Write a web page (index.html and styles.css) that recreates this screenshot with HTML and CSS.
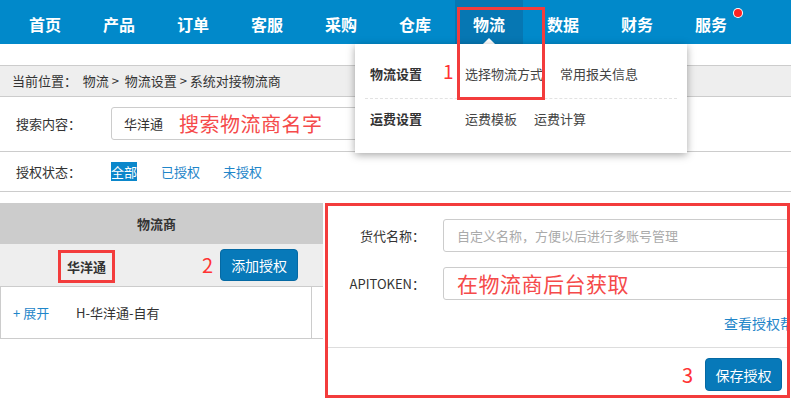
FILE: index.html
```html
<!DOCTYPE html>
<html lang="zh-CN">
<head>
<meta charset="UTF-8" />
<meta name="viewport" content="width=device-width, initial-scale=1" />
<title>系统对接物流商</title>
<link rel="stylesheet" href="styles.css">
</head>
<body>
  <header class="topnav">
    <ul class="nav">
      <li>首页</li>
      <li>产品</li>
      <li>订单</li>
      <li>客服</li>
      <li>采购</li>
      <li>仓库</li>
      <li class="active">物流</li>
      <li>数据</li>
      <li>财务</li>
      <li class="has-dot">服务</li>
    </ul>
  </header>

  <!-- open submenu of 物流 -->
  <div class="dropdown">
    <div class="menu-row first">
      <span class="menu-title">物流设置</span>
      <span class="menu-mark">1</span>
      <a class="menu-link">选择物流方式</a>
      <a class="menu-link">常用报关信息</a>
    </div>
    <div class="menu-row">
      <span class="menu-title">运费设置</span>
      <span class="menu-mark"></span>
      <a class="menu-link">运费模板</a>
      <a class="menu-link">运费计算</a>
    </div>
  </div>
  <div class="note-box note-one"></div>

  <div class="crumb">当前位置：&nbsp; 物流 &gt;&nbsp; 物流设置 &gt; 系统对接物流商</div>

  <div class="filter">
    <div class="filter-row search">
      <span class="filter-label">搜索内容：</span>
      <div class="search-box">
        <span class="search-value">华洋通</span>
        <span class="hint">搜索物流商名字</span>
      </div>
    </div>
    <div class="filter-row status">
      <span class="filter-label">授权状态：</span>
      <a class="tab current">全部</a>
      <a class="tab">已授权</a>
      <a class="tab">未授权</a>
    </div>
  </div>

  <div class="workspace">
    <div class="carrier-table">
      <div class="table-head">物流商</div>
      <div class="table-group">
        <span class="carrier-name">华洋通</span>
        <span class="step">2</span>
        <button class="btn">添加授权</button>
      </div>
      <div class="table-row">
        <div class="cell-main">
          <a class="expand">+ 展开</a>
          <span class="account">H-华洋通-自有</span>
        </div>
        <div class="cell-side"></div>
      </div>
    </div>

    <div class="auth-panel">
      <div class="auth-form">
        <div class="form-row">
          <label class="form-label">货代名称：</label>
          <div class="form-input placeholder">自定义名称，方便以后进行多账号管理</div>
        </div>
        <div class="form-row">
          <label class="form-label">APITOKEN：</label>
          <div class="form-input"><span class="hint">在物流商后台获取</span></div>
        </div>
        <div class="help"><a>查看授权帮助</a></div>
      </div>
      <div class="auth-footer">
        <span class="step">3</span>
        <button class="btn">保存授权</button>
      </div>
    </div>
  </div>
</body>
</html>
```

FILE: styles.css
```css
/* Reset */
* {
  box-sizing: border-box;
}
body {
  margin: 0;
  width: 791px;
  height: 401px;
  overflow: hidden;
  position: relative;
  background: #fff;
  font-family: 'Noto Sans CJK SC', 'Noto Sans', sans-serif;
  font-size: 13px;
  color: #333;
}
a {
  cursor: pointer;
}

/* top navigation */
.topnav {
  background: #0189ca;
  height: 44px;
}
.nav {
  list-style: none;
  margin: 0;
  padding: 0 0 0 8px;
  display: flex;
  height: 44px;
}
.nav li {
  position: relative;
  width: 68px;
  margin: 0 3px;
  text-align: center;
  line-height: 48px;
  font-size: 16px;
  font-weight: bold;
  color: #fff;
}
.nav li.active {
  background: #0677b3;
}
.nav li.active::after {
  content: '';
  position: absolute;
  left: 28px;
  bottom: 0;
  border-left: 6px solid transparent;
  border-right: 6px solid transparent;
  border-bottom: 6px solid #fff;
}
.nav li.has-dot::after {
  content: '';
  position: absolute;
  left: 57px;
  top: 9px;
  width: 8px;
  height: 8px;
  border-radius: 50%;
  background: #f22;
  box-shadow: 0 0 0 1px #fff;
}

/* submenu */
.dropdown {
  position: absolute;
  left: 355px;
  top: 44px;
  width: 332px;
  height: 109px;
  padding: 0 10px;
  background: #fff;
  box-shadow: 0 2px 8px rgba(0,0,0,0.35);
  z-index: 5;
}
.menu-row {
  display: flex;
  align-items: center;
  height: 38px;
  padding-left: 5px;
}
.menu-row.first {
  height: 55px;
  padding-top: 4px;
  border-bottom: 1px dashed #e2e2e2;
}
.menu-title {
  width: 73px;
  font-weight: bold;
  color: #333;
}
.menu-mark {
  width: 22px;
  font-size: 19px;
  color: #f33;
  line-height: 1;
  margin-top: -6px;
}
.menu-link {
  margin-right: 17px;
  color: #444;
}
.note-box {
  position: absolute;
  border: 3px solid #f33c3c;
  z-index: 6;
}
.note-one {
  left: 457px;
  top: 7px;
  width: 88px;
  height: 93px;
}

/* breadcrumb */
.crumb {
  margin-top: 21px;
  height: 32px;
  line-height: 30px;
  padding-left: 12px;
  background: #eee;
  border-top: 1px solid #ccc;
  border-bottom: 1px solid #ccc;
}

/* filter */
.filter-row {
  display: flex;
  align-items: center;
  padding-left: 16px;
  border-bottom: 1px solid #ccc;
}
.filter-row.search {
  height: 55px;
  padding-top: 10px;
  padding-bottom: 11px;
}
.filter-row.status {
  height: 40px;
}
.filter-label {
  flex: none;
  width: 95px;
  color: #333;
}
.search-box {
  display: flex;
  align-items: center;
  width: 420px;
  height: 33px;
  padding-left: 12px;
  border: 1px solid #ccc;
  border-radius: 3px;
}
.search-value {
  width: 55px;
}
.hint {
  font-size: 20px;
  color: #f54a4a;
  letter-spacing: 0.5px;
}
.tab {
  margin-right: 23px;
  color: #1f86c9;
  line-height: 19px;
}
.tab.current {
  background: #0b87cb;
  color: #fff;
  margin-right: 24px;
}

/* workspace */
.workspace {
  display: flex;
  margin-top: 11px;
}
.carrier-table {
  width: 323px;
  flex: none;
}
.table-head {
  height: 41px;
  line-height: 41px;
  background: #ccc;
  text-align: center;
  font-weight: bold;
  padding-right: 10px;
}
.table-group {
  display: flex;
  align-items: center;
  height: 43px;
  padding-left: 58px;
  background: #eee;
  border-bottom: 1px solid #ccc;
}
.carrier-name {
  border: 3px solid #f33c3c;
  padding: 0 6px;
  line-height: 27px;
  font-weight: bold;
  margin-top: 2px;
}
.table-group .step {
  margin-left: 87px;
  margin-right: 7px;
}
.step {
  font-size: 20px;
  color: #f33;
  line-height: 1;
}
.btn {
  width: 78px;
  height: 32px;
  border: 1px solid #0569a3;
  border-radius: 4px;
  background: #0779b9;
  color: #fff;
  font-family: inherit;
  font-size: 14px;
  padding: 0;
  cursor: pointer;
}
.table-row {
  display: flex;
  height: 52px;
  border-left: 1px solid #ccc;
  border-bottom: 1px solid #ccc;
}
.cell-main {
  width: 311px;
  display: flex;
  align-items: center;
  padding-left: 12px;
  border-right: 1px solid #ccc;
}
.expand {
  width: 63px;
  color: #1f86c9;
}

/* auth panel */
.auth-panel {
  margin-left: 2px;
  width: 465px;
  height: 195px;
  border: 3px solid #f33c3c;
  overflow: hidden;
}
.auth-form {
  padding-top: 13px;
}
.form-row {
  display: flex;
  align-items: center;
  margin-bottom: 15px;
}
.form-row + .form-row {
  margin-bottom: 0;
}
.form-label {
  flex: none;
  width: 97px;
  margin-right: 18px;
  text-align: right;
  white-space: nowrap;
  color: #333;
}
.form-input {
  flex: none;
  width: 400px;
  height: 33px;
  line-height: 31px;
  padding-left: 13px;
  border: 1px solid #ccc;
  border-radius: 3px;
  white-space: nowrap;
}
.form-input.placeholder {
  color: #aaa;
}
.form-input .hint {
  font-size: 21px;
}
.help {
  height: 47px;
  line-height: 47px;
  padding-left: 396px;
  white-space: nowrap;
  font-size: 14px;
}
.help a {
  color: #1f86c9;
}
.auth-footer {
  display: flex;
  justify-content: flex-end;
  align-items: center;
  border-top: 1px solid #ddd;
  padding: 10px 5px 3px 0;
}
.auth-footer .step {
  margin-right: 12px;
}
.auth-footer .btn {
  width: 77px;
  height: 33px;
}
```
